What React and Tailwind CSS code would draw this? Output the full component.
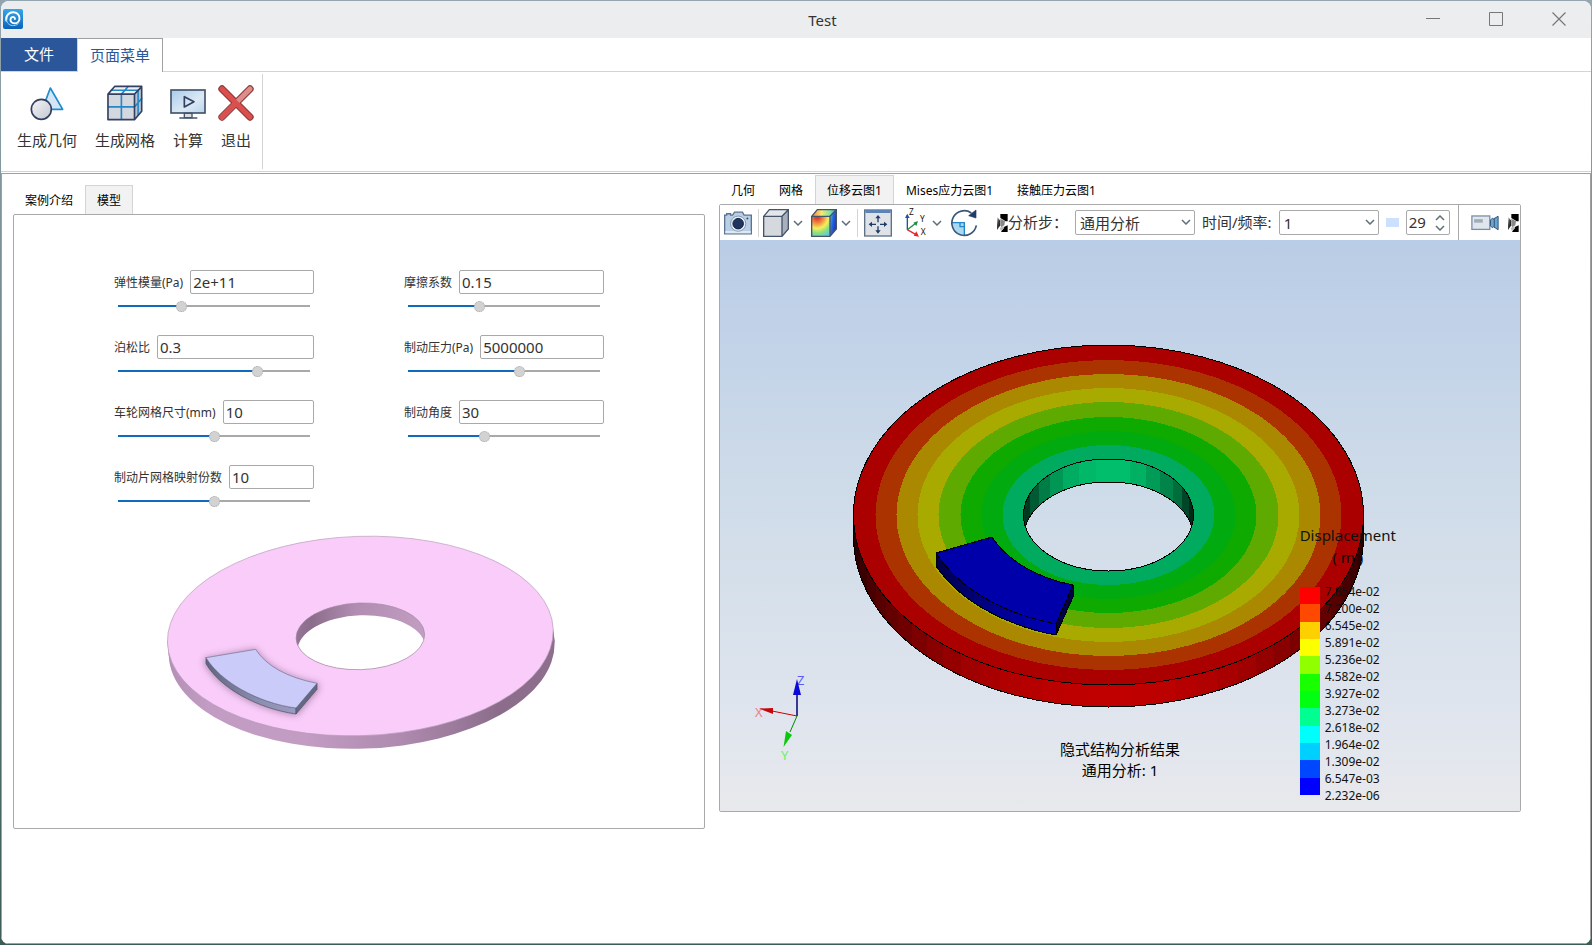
import { useState } from "react"

const STEEL = "#44546a"

// ---------- ribbon icons ----------

function AppLogo() {
  return (
    <svg viewBox="0 0 20 20" className="size-5 shrink-0" aria-hidden>
      <defs>
        <linearGradient id="logo" x1="0" y1="0" x2="0" y2="1">
          <stop offset="0" stopColor="#35a7ea" />
          <stop offset="1" stopColor="#0b62b8" />
        </linearGradient>
      </defs>
      <rect width="20" height="20" rx="2" fill="url(#logo)" />
      <path
        d="M3.2 11.5C2.6 6 6.5 3 10.5 3.2c4 .3 6.3 3.3 6 6.6-.3 3-2.8 4.7-5.3 4.5-2.3-.2-3.9-1.8-3.7-3.8.2-1.7 1.5-2.6 2.9-2.4 1.1.2 1.7 1 1.5 1.9"
        fill="none"
        stroke="#fff"
        strokeWidth="1.9"
        strokeLinecap="round"
      />
      <path d="M3.4 10.5c.4 4 3.6 6.3 7.2 6.1 2.6-.2 4.3-1.4 5.3-3" fill="none" stroke="#9fd4f5" strokeWidth="1" />
    </svg>
  )
}

function GeometryIcon() {
  return (
    <svg viewBox="0 0 108 108" className="size-9" aria-hidden>
      <defs>
        <linearGradient id="geoBall" x1="0" y1="0" x2="1" y2="1">
          <stop offset="0" stopColor="#f4f5f7" />
          <stop offset="1" stopColor="#c3c8d0" />
        </linearGradient>
      </defs>
      <path d="M64 9 101 73H40Z" fill="#d4e6f5" stroke="#1f8bd0" strokeWidth="5" strokeLinejoin="round" />
      <circle cx="37" cy="73" r="30" fill="url(#geoBall)" stroke="#34405f" strokeWidth="5" />
    </svg>
  )
}

function MeshIcon() {
  return (
    <svg viewBox="0 0 110 110" className="size-9" aria-hidden>
      <path d="M2 28 24 3H107L84 28Z" fill="#eef2f6" />
      <path d="M2 28H84V106H2Z" fill="#d3d7de" />
      <path d="M84 28 107 3V80L84 106Z" fill="#b7c3d2" />
      <path
        d="M2 67H84L107 40M44 106V28L66 3M12 16H95V93"
        fill="none"
        stroke="#2387c8"
        strokeWidth="5"
      />
      <path
        d="M3 28 24 4H106V80L84 106H3ZM3 28H84V106M84 28 107 4"
        fill="none"
        stroke="#34405f"
        strokeWidth="5"
        strokeLinejoin="round"
      />
    </svg>
  )
}

function ComputeIcon() {
  return (
    <svg viewBox="0 0 108 108" className="size-9" aria-hidden>
      <defs>
        <linearGradient id="screen" x1="0" y1="0" x2="1" y2="1">
          <stop offset="0" stopColor="#a9cbea" />
          <stop offset="0.6" stopColor="#dce9f5" />
          <stop offset="1" stopColor="#b9d3ec" />
        </linearGradient>
      </defs>
      <rect x="3" y="15" width="102" height="69" fill="url(#screen)" stroke={STEEL} strokeWidth="5" />
      <path d="M43 35 72 50 43 66Z" fill="none" stroke="#34405f" strokeWidth="5" strokeLinejoin="round" />
      <rect x="43" y="85" width="23" height="13" fill="#d9dee6" stroke={STEEL} strokeWidth="4" />
      <path d="M28 99H82" stroke={STEEL} strokeWidth="5" />
    </svg>
  )
}

function ExitIcon() {
  return (
    <svg viewBox="0 0 108 108" className="size-9" aria-hidden>
      <path d="M12 12 96 96M96 12 12 96" stroke="#8d3a3c" strokeWidth="22" strokeLinecap="round" />
      <path d="M96 12 12 96" stroke="#e08c8a" strokeWidth="15" strokeLinecap="round" />
      <path d="M12 12 96 96M54 54 12 96" stroke="#d9504f" strokeWidth="15" strokeLinecap="round" />
    </svg>
  )
}

// ---------- result toolbar icons ----------

function CameraIcon() {
  return (
    <svg viewBox="0 0 85 72" className="h-6 w-7" aria-hidden>
      <path d="M2 12H8V8H20V12H26L32 3H56L61 12H83V69H2Z" fill="#b9cfe6" stroke="#5c7390" strokeWidth="4" />
      <path d="M4 60H81V67H4Z" fill="#dfe9f3" />
      <circle cx="43" cy="38" r="23" fill="#e9eff6" stroke="#5c7390" strokeWidth="2" />
      <circle cx="43" cy="38" r="16" fill="#1e355f" stroke="#0f2140" strokeWidth="3" />
      <circle cx="71" cy="22" r="3" fill="#34506f" />
    </svg>
  )
}

function CubeIcon() {
  return (
    <svg viewBox="0 0 78 84" className="h-7 w-[26px]" aria-hidden>
      <path d="M2 22 19 2H76L57 22Z" fill="#e3e6ea" />
      <path d="M2 22H57V82H2Z" fill="#d5d8dd" />
      <path d="M57 22 76 2V60L57 82Z" fill="#a9b0bb" />
      <path d="M2 22 19 2H76V60L57 82H2ZM2 22H57V82M57 22 76 2" fill="none" stroke={STEEL} strokeWidth="4" />
    </svg>
  )
}

function ContourCubeIcon() {
  return (
    <svg viewBox="0 0 78 84" className="h-7 w-[26px]" aria-hidden>
      <defs>
        <radialGradient id="cubeFront" cx="0.3" cy="0" r="1.1">
          <stop offset="0.1" stopColor="#e23b32" />
          <stop offset="0.35" stopColor="#f29a45" />
          <stop offset="0.55" stopColor="#f6ee5c" />
          <stop offset="0.75" stopColor="#8fe07c" />
          <stop offset="1" stopColor="#58c8e8" />
        </radialGradient>
        <linearGradient id="cubeTop" x1="0" y1="0" x2="1" y2="0">
          <stop offset="0" stopColor="#ef7d45" />
          <stop offset="0.4" stopColor="#f6ea72" />
          <stop offset="0.75" stopColor="#7fe3a0" />
          <stop offset="1" stopColor="#3f8ce0" />
        </linearGradient>
        <linearGradient id="cubeSide" x1="0" y1="0" x2="1" y2="0.6">
          <stop offset="0" stopColor="#4fd0d8" />
          <stop offset="0.5" stopColor="#2468e0" />
          <stop offset="1" stopColor="#1a2fc0" />
        </linearGradient>
      </defs>
      <path d="M2 22 19 2H76L57 22Z" fill="url(#cubeTop)" />
      <path d="M2 22H57V82H2Z" fill="url(#cubeFront)" />
      <path d="M57 22 76 2V60L57 82Z" fill="url(#cubeSide)" />
      <path d="M2 22 19 2H76V60L57 82H2ZM2 22H57V82M57 22 76 2" fill="none" stroke={STEEL} strokeWidth="4" />
    </svg>
  )
}

function FitIcon() {
  return (
    <svg viewBox="0 0 84 84" className="size-7" aria-hidden>
      <rect x="2" y="3" width="80" height="78" fill="#dfe2e7" stroke="#5f7189" strokeWidth="4" />
      <rect x="4" y="3" width="76" height="9" fill="#5b84b4" />
      <path d="M42 24v16M42 52v16M20 46h16M48 46h16" stroke="#1f3c68" strokeWidth="4" />
      <path d="M42 18l8 10H34ZM42 74l8-10H34ZM14 46l10-8v16ZM70 46l-10-8v16Z" fill="#1f3c68" />
    </svg>
  )
}

function AxesIcon() {
  return (
    <svg viewBox="0 -9 72 99" className="h-[33px] w-6" aria-hidden>
      <path d="M10 62V18" stroke="#2353a4" strokeWidth="4" />
      <path d="M10 14 3 27H17Z" fill="#2353a4" />
      <path d="M10 62 36 42" stroke="#18913f" strokeWidth="4" />
      <path d="M42 36 28 41 37 51Z" fill="#18913f" />
      <path d="M10 62 36 77" stroke="#e8262a" strokeWidth="4" />
      <path d="M45 83 29 80 37 67Z" fill="#e8262a" />
      <g fontSize="25" fill="#111">
        <text x="15" y="18">Z</text>
        <text x="48" y="40">Y</text>
        <text x="50" y="79">X</text>
      </g>
    </svg>
  )
}

function RotateIcon() {
  return (
    <svg viewBox="0 0 84 84" className="size-7" aria-hidden>
      <path d="M7 41H43V77A36 36 0 0 1 7 41Z" fill="#a9daf2" />
      <path d="M6 41H43V78M30 41V53H43" fill="none" stroke="#2387c8" strokeWidth="4" />
      <path d="M64 12A37 37 0 1 0 79 49" fill="none" stroke="#3b5878" strokeWidth="5" />
      <path d="M56 20 78 3V27Z" fill="#1f3c68" stroke="#1f3c68" strokeWidth="2" />
    </svg>
  )
}

function RecorderIcon() {
  return (
    <svg viewBox="0 0 86 50" className="h-4 w-7" aria-hidden>
      <rect x="2" y="3" width="56" height="42" fill="#dfe6ee" stroke="#7a8ca6" strokeWidth="4" />
      <rect x="9" y="13" width="27" height="11" fill="#a3abb5" />
      <path d="M60 16 66 10 70 12 84 4V46L70 37 66 40 60 34Z" fill="#6aa5cf" stroke="#2d4f77" strokeWidth="3" />
      <path d="M72 12V37" stroke="#2d4f77" strokeWidth="3" />
    </svg>
  )
}

function ToolbarStub() {
  return (
    <svg viewBox="0 0 34 54" className="h-[18px] w-3 shrink-0" aria-hidden>
      <defs>
        <linearGradient id="stub" x1="0" y1="0" x2="1" y2="1">
          <stop offset="0" stopColor="#fff" />
          <stop offset="0.4" stopColor="#444" />
          <stop offset="1" stopColor="#000" />
        </linearGradient>
      </defs>
      <path d="M2 8 12 20V34L2 48Z" fill="url(#stub)" />
      <path d="M12 0H34V22H28L12 12ZM34 54H14L24 38 34 34Z" fill="#000" />
      <path d="M12 14 26 22 24 34 14 40Z" fill="#888" />
      <path d="M10 42 20 36 24 42 14 52Z" fill="#bbb" />
    </svg>
  )
}

function Chevron({ up = false }) {
  return (
    <svg viewBox="0 0 10 6" className={`h-1.5 w-2.5 ${up ? "rotate-180" : ""}`} aria-hidden>
      <path d="M1 1 5 5 9 1" fill="none" stroke="#5f6f78" strokeWidth="1.5" />
    </svg>
  )
}

// ---------- model parameters ----------

const PARAMETERS = [
  { id: "elastic", label: "弹性模量(Pa)", value: "2e+11", level: 31.8 },
  { id: "friction", label: "摩擦系数", value: "0.15", level: 36.2 },
  { id: "poisson", label: "泊松比", value: "0.3", level: 73.8 },
  { id: "pressure", label: "制动压力(Pa)", value: "5000000", level: 58.3 },
  { id: "wheelMesh", label: "车轮网格尺寸(mm)", value: "10", level: 50.5 },
  { id: "angle", label: "制动角度", value: "30", level: 39.5 },
  { id: "padMesh", label: "制动片网格映射份数", value: "10", level: 50.5 },
]

function ParameterField({ id, label, value, level }) {
  const [text, setText] = useState(value)
  const [position, setPosition] = useState(level)

  return (
    <div>
      <div className="flex items-center gap-[7px]">
        <label htmlFor={id} className="shrink-0 pt-0.5 text-xs text-[#333]">{label}</label>
        <input
          id={id}
          type="text"
          value={text}
          onChange={(e) => setText(e.target.value)}
          className="h-6 w-0 min-w-0 flex-1 rounded-[2px] border border-[#a9a9a9] bg-white px-[2px] text-[15px] text-[#333] outline-none focus:border-[#0f6cbd]"
        />
      </div>
      <div className="flex h-6 items-center px-1">
        <input
          type="range"
          aria-label={label}
          min="0"
          max="100"
          step="0.1"
          value={position}
          onChange={(e) => setPosition(Number(e.target.value))}
          style={{ backgroundImage: `linear-gradient(to right, #0f6cbd ${position}%, #a9a9a9 ${position}%)` }}
          className="h-[2px] w-full appearance-none outline-none [&::-webkit-slider-thumb]:size-[11px] [&::-webkit-slider-thumb]:appearance-none [&::-webkit-slider-thumb]:rounded-full [&::-webkit-slider-thumb]:border [&::-webkit-slider-thumb]:border-dotted [&::-webkit-slider-thumb]:border-[#a9a9a9] [&::-webkit-slider-thumb]:bg-[#d2d2d2]"
        />
      </div>
    </div>
  )
}

// Shaded preview of the disc and the brake pad.
function DiscPreview() {
  return (
    <svg viewBox="-3 0 1260 720" className="mx-auto mt-2 w-[420px] max-w-full" role="img" aria-label="模型">
      <defs>
        <linearGradient id="rim" gradientUnits="userSpaceOnUse" x1="52" y1="0" x2="1214" y2="0">
          <stop offset="0" stopColor="#b48fb5" />
          <stop offset="0.1" stopColor="#c29cc3" />
          <stop offset="0.35" stopColor="#c29cc3" />
          <stop offset="0.6" stopColor="#ae8aae" />
          <stop offset="0.85" stopColor="#8b6d8b" />
          <stop offset="1" stopColor="#8e708e" />
        </linearGradient>
        <linearGradient id="bore" gradientUnits="userSpaceOnUse" x1="438" y1="0" x2="825" y2="0">
          <stop offset="0" stopColor="#94749a" />
          <stop offset="0.12" stopColor="#8b6d8b" />
          <stop offset="0.45" stopColor="#b08cb0" />
          <stop offset="1" stopColor="#c29ec3" />
        </linearGradient>
        <linearGradient id="padSide" gradientUnits="userSpaceOnUse" x1="168" y1="0" x2="438" y2="0">
          <stop offset="0" stopColor="#62657e" />
          <stop offset="0.6" stopColor="#8d8fb0" />
          <stop offset="1" stopColor="#9a9bc0" />
        </linearGradient>
        <clipPath id="boreClip">
          <ellipse cx="631" cy="346" rx="193" ry="100" transform="rotate(-2 631 346)" />
        </clipPath>
        <filter id="padShadow" x="-20%" y="-20%" width="140%" height="140%">
          <feGaussianBlur stdDeviation="11" />
        </filter>
      </defs>
      <path d="M52 360 56 404 1214 364 1210 326Z" fill="url(#rim)" />
      <ellipse cx="635" cy="384" rx="579" ry="299" transform="rotate(-2 635 384)" fill="url(#rim)" />
      <ellipse cx="631" cy="345" rx="579" ry="299" transform="rotate(-2 631 345)" fill="#f9ccf9" stroke="#b79cb7" strokeWidth="2" />
      <g clipPath="url(#boreClip)">
        <rect x="430" y="240" width="400" height="210" fill="url(#bore)" />
        <ellipse cx="634" cy="384" rx="192" ry="101" transform="rotate(-2 634 384)" fill="#fff" />
      </g>
      <ellipse cx="631" cy="346" rx="193" ry="100" transform="rotate(-2 631 346)" fill="none" stroke="#a487a4" strokeWidth="2" />
      <path
        d="M164 412 317 383Q365 460 505 487V508L440 583C320 566 210 505 164 430Z"
        fill="#7d5c80"
        opacity="0.6"
        filter="url(#padShadow)"
      />
      <path d="M168 410C210 480 320 545 438 561V579C320 562 210 500 168 428Z" fill="url(#padSide)" stroke="#4c4f66" strokeWidth="2" />
      <path d="M438 561 501 487V505L438 579Z" fill="#646882" stroke="#4c4f66" strokeWidth="2" />
      <path d="M168 410 317 385Q365 460 501 487L438 561C320 545 210 480 168 410Z" fill="#cbcbf9" stroke="#6f7190" strokeWidth="2" />
    </svg>
  )
}

// ---------- result view ----------

// Displacement bands of the disc face, outermost first.
const BANDS = [
  { rx: 255, ry: 170, fill: "#aa0000" },
  { rx: 233, ry: 155, fill: "#aa3300" },
  { rx: 212, ry: 141, fill: "#aa8800" },
  { rx: 191, ry: 127, fill: "#a8aa00" },
  { rx: 170, ry: 113, fill: "#5faa00" },
  { rx: 148, ry: 98, fill: "#0faa00" },
  { rx: 127, ry: 84, fill: "#00aa0f" },
  { rx: 106, ry: 70, fill: "#00aa5f" },
]

const BORE_FACETS = [
  [1022, "#00391f"],
  [1030, "#005a33"],
  [1039, "#007d46"],
  [1050, "#009654"],
  [1063, "#00ac62"],
  [1079, "#00b868"],
  [1096, "#00be6b"],
  [1130, "#00b063"],
  [1146, "#009c57"],
  [1160, "#00844a"],
  [1173, "#006d3c"],
  [1182, "#004628"],
  [1189, "#002a18"],
]

const CX = 1108.5
const CY = 515
const FACETS = 36

// Rim facets, darker towards both sides. Each one reaches under the next.
const RIM_FACETS = Array.from({ length: FACETS }, (_, i) => {
  const step = Math.PI / FACETS
  const x = Math.round(CX - 257 * Math.cos(i * step))
  const red = Math.round(24 + 168 * Math.pow(Math.sin((i + 0.5) * step), 1.3))
  return { x, fill: `rgb(${red},0,0)` }
})

const LEGEND = [
  "#ff0000", "#ff4800", "#ffd000", "#fbff00", "#90ff00", "#18ff00",
  "#00ff10", "#00ff90", "#00fffb", "#00d0ff", "#0048ff", "#0000ff",
]

const LEGEND_VALUES = [
  "7.854e-02", "7.200e-02", "6.545e-02", "5.891e-02", "5.236e-02", "4.582e-02", "3.927e-02",
  "3.273e-02", "2.618e-02", "1.964e-02", "1.309e-02", "6.547e-03", "2.232e-06",
]

function ResultDisc() {
  return (
    <svg viewBox="720 240 800 571" className="block w-full" role="img" aria-label="位移云图1">
      <defs>
        <linearGradient id="sky" gradientUnits="userSpaceOnUse" x1="0" y1="240" x2="0" y2="811">
          <stop offset="0" stopColor="#b9cce5" />
          <stop offset="0.15" stopColor="#c1d2e8" />
          <stop offset="0.5" stopColor="#d1dde9" />
          <stop offset="0.85" stopColor="#e0e5ee" />
          <stop offset="1" stopColor="#e8e9ec" />
        </linearGradient>
        <linearGradient id="resultPad" gradientUnits="userSpaceOnUse" x1="936" y1="0" x2="1056" y2="0">
          <stop offset="0" stopColor="#000048" />
          <stop offset="0.5" stopColor="#000090" />
          <stop offset="1" stopColor="#0000b8" />
        </linearGradient>
        <clipPath id="rimClip">
          <path d="M853.5 515V537A255 170 0 0 0 1363.5 537V515Z" />
        </clipPath>
        <clipPath id="resultBore">
          <ellipse cx={CX} cy={CY} rx="85" ry="56" />
        </clipPath>
      </defs>
      <rect x="720" y="240" width="800" height="571" fill="url(#sky)" />

      <g shapeRendering="crispEdges">
        <g clipPath="url(#rimClip)">
          {RIM_FACETS.map((f) => (
            <rect key={f.x} x={f.x} y="510" width="100" height="200" fill={f.fill} />
          ))}
        </g>
        <path d="M853.5 515V537A255 170 0 0 0 1363.5 537V515" fill="none" stroke="#000" />
        {BANDS.map((band) => (
          <ellipse key={band.rx} cx={CX} cy={CY} rx={band.rx} ry={band.ry} fill={band.fill} />
        ))}
        <ellipse cx={CX} cy={CY} rx="255" ry="170" fill="none" stroke="#000" />
        <g clipPath="url(#resultBore)">
          {BORE_FACETS.map(([x, fill]) => (
            <rect key={x} x={x} y="455" width="40" height="120" fill={fill} />
          ))}
          <ellipse cx={CX} cy={CY + 23} rx="85" ry="56" fill="url(#sky)" stroke="#000" />
        </g>
        <ellipse cx={CX} cy={CY} rx="85" ry="56" fill="none" stroke="#000" />
      </g>

      <g stroke="#000" strokeLinejoin="round" shapeRendering="crispEdges">
        <path d="M936 553A187 125 0 0 0 1056 624V635A187 125 0 0 1 936 566Z" fill="url(#resultPad)" />
        <path d="M1056 624 1073 585V597L1056 635Z" fill="#000044" />
        <path d="M936 553 992 537A127 85 0 0 0 1073 585L1056 624A187 125 0 0 1 936 553Z" fill="#0000aa" />
      </g>

      <g fontSize="13">
        <text x="797" y="685" fill="#5a5af5">Z</text>
        <path d="M797 716V694" stroke="#00007a" strokeWidth="1.5" />
        <path d="M797 679 801 695H793Z" fill="#0a0ad8" />
        <text x="755" y="717" fill="#f07f84">X</text>
        <path d="M797 716 772 711" stroke="#d00000" />
        <path d="M759 708.5 773 708V714Z" fill="#c40808" />
        <text x="781" y="760" fill="#66f266">Y</text>
        <path d="M797 716 790 732" stroke="#008a00" />
        <path d="M783.5 747 786 731 792 735Z" fill="#0cc80c" />
      </g>
    </svg>
  )
}

function ResultView() {
  return (
    <div className="relative overflow-hidden">
      <ResultDisc />
      <div className="absolute inset-x-0 bottom-[30px] text-center text-[15px] leading-[21px] text-black">
        <p>隐式结构分析结果</p>
        <p>通用分析: 1</p>
      </div>
      <div className="absolute right-[124px] bottom-[7px] text-[#111]">
        <div className="text-center text-[15px] leading-[22px]">
          <p>Displacement</p>
          <p>( m )</p>
        </div>
        <div className="mt-[15px] flex gap-[5px]">
          <div className="mt-1 flex h-[208px] w-5 flex-col">
            {LEGEND.map((color) => (
              <span key={color} className="flex-1" style={{ backgroundColor: color }} />
            ))}
          </div>
          <ul className="text-xs leading-[17px]">
            {LEGEND_VALUES.map((value) => (
              <li key={value}>{value}</li>
            ))}
          </ul>
        </div>
      </div>
    </div>
  )
}

function ToolbarSelect({ id, options, className }) {
  return (
    <div className={`relative shrink-0 ${className}`}>
      <select
        id={id}
        className="h-[25px] w-full appearance-none rounded-[2px] border border-[#a9a9a9] bg-white pl-1 text-[15px] leading-5 text-[#333] outline-none"
      >
        {options.map((option) => (
          <option key={option}>{option}</option>
        ))}
      </select>
      <span className="pointer-events-none absolute top-[9px] right-1">
        <Chevron />
      </span>
    </div>
  )
}

function DropButton({ label }) {
  return (
    <button type="button" aria-label={label} className="flex h-7 w-[18px] shrink-0 items-center justify-center">
      <Chevron />
    </button>
  )
}

function ResultToolbar() {
  const [frame, setFrame] = useState("29")
  const step = (delta) => setFrame(String(Number(frame) + delta))

  return (
    <div className="flex h-[35px] items-center overflow-hidden bg-white pl-1 text-[15px] whitespace-nowrap text-[#333]">
      <button type="button" aria-label="截图" className="shrink-0"><CameraIcon /></button>
      <span className="ml-1.5 h-7 w-px shrink-0 bg-[#d4d4d4]" />
      <button type="button" aria-label="视图" className="ml-1 shrink-0"><CubeIcon /></button>
      <DropButton label="视图选项" />
      <button type="button" aria-label="云图" className="ml-1 shrink-0"><ContourCubeIcon /></button>
      <DropButton label="云图选项" />
      <span className="ml-0.5 h-7 w-px shrink-0 bg-[#d4d4d4]" />
      <button type="button" aria-label="适应窗口" className="ml-1.5 shrink-0"><FitIcon /></button>
      <button type="button" aria-label="坐标轴" className="ml-3 shrink-0"><AxesIcon /></button>
      <DropButton label="坐标轴选项" />
      <button type="button" aria-label="旋转" className="ml-1 shrink-0"><RotateIcon /></button>
      <span className="ml-[18px] shrink-0"><ToolbarStub /></span>
      <label htmlFor="analysis" className="shrink-0">分析步：</label>
      <ToolbarSelect id="analysis" options={["通用分析"]} className="ml-[7px] w-[120px]" />
      <label htmlFor="time" className="ml-[7px] shrink-0">时间/频率:</label>
      <ToolbarSelect id="time" options={["1"]} className="ml-[7px] w-[100px]" />
      <span className="ml-[7px] h-[9px] w-[13px] shrink-0 bg-[#cce0ff]" />
      <div className="ml-[7px] flex h-[25px] w-11 shrink-0 items-center rounded-[2px] border border-[#a9a9a9]">
        <input
          type="text"
          aria-label="帧"
          value={frame}
          onChange={(e) => setFrame(e.target.value)}
          className="w-0 min-w-0 flex-1 pl-[2px] outline-none"
        />
        <div className="mr-1 flex flex-col gap-1">
          <button type="button" aria-label="增加" onClick={() => step(1)}><Chevron up /></button>
          <button type="button" aria-label="减少" onClick={() => step(-1)}><Chevron /></button>
        </div>
      </div>
      <span className="ml-2 h-full w-px shrink-0 bg-[#a9a9a9]" />
      <button type="button" aria-label="录制" className="ml-3 shrink-0"><RecorderIcon /></button>
      <span className="ml-2 shrink-0"><ToolbarStub /></span>
    </div>
  )
}

// ---------- page ----------

function Tabs({ tabs, active, onSelect }) {
  return (
    <div role="tablist" className="flex h-[29px]">
      {tabs.map((tab) => (
        <button
          key={tab}
          type="button"
          role="tab"
          aria-selected={tab === active}
          onClick={() => onSelect(tab)}
          className={`border border-b-0 px-[11px] pt-0.5 text-xs whitespace-nowrap text-black ${
            tab === active ? "border-[#d4d4d4] bg-[#f2f2f2]" : "border-transparent"
          }`}
        >
          {tab}
        </button>
      ))}
    </div>
  )
}

const RIBBON = [
  { label: "生成几何", Icon: GeometryIcon, width: "w-[78px]" },
  { label: "生成网格", Icon: MeshIcon, width: "w-[78px]" },
  { label: "计算", Icon: ComputeIcon, width: "w-12" },
  { label: "退出", Icon: ExitIcon, width: "w-12" },
]

function TitleBar() {
  return (
    <header className="relative flex h-[37px] items-center bg-[#ecedef] pl-[2px]">
      <div className="-mt-[2px]"><AppLogo /></div>
      <h1 className="absolute inset-x-0 pt-0.5 pl-[53px] text-center text-[15px] text-[#333]">Test</h1>
      <div className="relative mr-px ml-auto flex pb-px text-[#777]">
        <button type="button" aria-label="最小化" className="flex h-9 w-[63px] items-center justify-center">
          <svg viewBox="0 0 14 14" className="size-3.5"><path d="M0 6.5H14" stroke="currentColor" /></svg>
        </button>
        <button type="button" aria-label="最大化" className="flex h-9 w-[63px] items-center justify-center">
          <svg viewBox="0 0 14 14" className="size-3.5"><path d="M.5.5H13.5V13.5H.5Z" fill="none" stroke="currentColor" /></svg>
        </button>
        <button type="button" aria-label="关闭" className="flex h-9 w-[63px] items-center justify-center">
          <svg viewBox="0 0 14 14" className="size-3.5"><path d="M.5.5 13.5 13.5M13.5.5.5 13.5" stroke="currentColor" strokeWidth="1.2" /></svg>
        </button>
      </div>
    </header>
  )
}

export default function App() {
  const [leftTab, setLeftTab] = useState("模型")
  const [rightTab, setRightTab] = useState("位移云图1")

  return (
    <div className="flex min-h-screen flex-col bg-linear-to-b from-[#93a5ae] to-[#3d5c58] p-px font-['Noto_Sans','Noto_Sans_CJK_SC',sans-serif]">
      <div className="flex flex-1 flex-col overflow-hidden rounded-lg bg-white">
        <TitleBar />

        <nav className="flex h-[34px] text-[15px]">
          <button type="button" className="w-[76px] border-b border-[#d4d4d4] bg-[#2b579a] text-white">文件</button>
          <button type="button" className="w-[86px] border-t border-r border-l border-[#a0a0a0] border-l-[#d4d4d4] text-[#2b579a]">
            页面菜单
          </button>
          <span className="flex-1 border-b border-[#d4d4d4]" />
        </nav>

        <div className="flex h-[100px] border-b border-[#d4d4d4] pl-[7px]">
          <div className="my-[2px] flex border-r border-[#d4d4d4] pr-[2px]">
            {RIBBON.map(({ label, Icon, width }) => (
              <button key={label} type="button" className={`flex flex-col items-center pt-[11px] text-[15px] text-[#333] ${width}`}>
                <Icon />
                <span className="mt-[7px] leading-6 whitespace-nowrap">{label}</span>
              </button>
            ))}
          </div>
        </div>

        <main className="mt-px grid flex-1 grid-cols-[692fr_802fr] items-start gap-3.5 border border-[#a0a0a0] pr-[69px] pb-4 pl-[11px]">
          <section className="pt-[11px]">
            <Tabs tabs={["案例介绍", "模型"]} active={leftTab} onSelect={setLeftTab} />
            <div className="rounded-[2px] border border-[#a9a9a9] pt-[55px] pb-[67px]">
              <div className="grid grid-cols-2 gap-x-[90px] gap-y-[17px] px-[100px]">
                {PARAMETERS.map((p) => (
                  <ParameterField key={p.id} {...p} />
                ))}
              </div>
              <DiscPreview />
            </div>
          </section>

          <section className="pt-px">
            <Tabs
              tabs={["几何", "网格", "位移云图1", "Mises应力云图1", "接触压力云图1"]}
              active={rightTab}
              onSelect={setRightTab}
            />
            <div className="overflow-hidden rounded-[2px] border border-[#a9a9a9]">
              <ResultToolbar />
              <ResultView />
            </div>
          </section>
        </main>
      </div>
    </div>
  )
}
